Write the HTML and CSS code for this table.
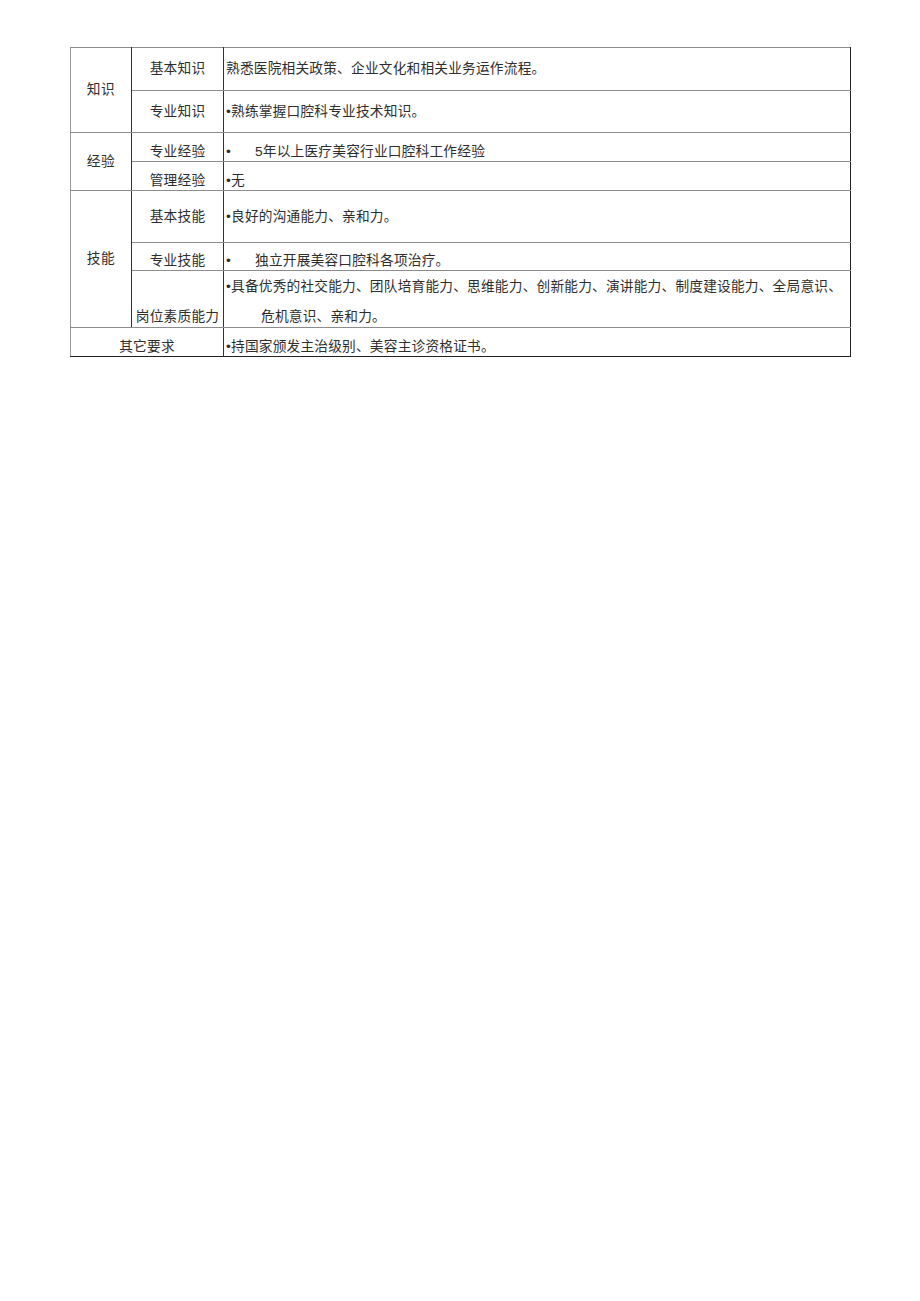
FILE: index.html
```html
<!DOCTYPE html>
<html lang="zh-CN">
<head>
<meta charset="utf-8">
<title>岗位要求</title>
<link rel="stylesheet" href="styles.css">
</head>
<body>
<div class="page">
<table class="req">
  <colgroup>
    <col class="c1"><col class="c2"><col class="c3">
  </colgroup>
  <tbody>
    <tr class="r1">
      <td class="cat" rowspan="2">知识</td>
      <td class="sub mid">基本知识</td>
      <td class="txt mid">熟悉医院相关政策、企业文化和相关业务运作流程。</td>
    </tr>
    <tr class="r2">
      <td class="sub mid">专业知识</td>
      <td class="txt mid">•熟练掌握口腔科专业技术知识。</td>
    </tr>
    <tr class="r3">
      <td class="cat" rowspan="2">经验</td>
      <td class="sub">专业经验</td>
      <td class="txt">•<span class="gap"></span>5年以上医疗美容行业口腔科工作经验</td>
    </tr>
    <tr class="r4">
      <td class="sub">管理经验</td>
      <td class="txt">•无</td>
    </tr>
    <tr class="r5">
      <td class="cat" rowspan="3">技能</td>
      <td class="sub mid">基本技能</td>
      <td class="txt mid">•良好的沟通能力、亲和力。</td>
    </tr>
    <tr class="r6">
      <td class="sub">专业技能</td>
      <td class="txt">•<span class="gap"></span>独立开展美容口腔科各项治疗。</td>
    </tr>
    <tr class="r7">
      <td class="sub">岗位素质能力</td>
      <td class="txt multi">
        <div class="ln">•具备优秀的社交能力、团队培育能力、思维能力、创新能力、演讲能力、制度建设能力、全局意识、</div>
        <div class="ln indent">危机意识、亲和力。</div>
      </td>
    </tr>
    <tr class="r8">
      <td class="sub" colspan="2">其它要求</td>
      <td class="txt">•持国家颁发主治级别、美容主诊资格证书。</td>
    </tr>
  </tbody>
</table>
</div>
</body>
</html>
```

FILE: styles.css
```css
html, body {
  margin: 0;
  padding: 0;
  background: #ffffff;
}

body {
  font-family: "Liberation Sans", "Noto Sans CJK SC", sans-serif;
  color: #2e2e2e;
}

.page {
  padding: 47px 0 0 70px;
}

.req {
  border-collapse: collapse;
  table-layout: fixed;
  width: 780px;
  font-size: 13.7px;
  line-height: 16px;
  letter-spacing: 0.2px;
  border-top: 1px solid #8c8c8c;
  border-left: 1px solid #9a9a9a;
  border-right: 1px solid #222;
  border-bottom: 1px solid #222;
}

.c1 { width: 61px; }
.c2 { width: 92px; }
.c3 { width: 627px; }

.req td {
  padding: 0;
  border-top: 1px solid #8c8c8c;
  border-bottom: 1px solid #8c8c8c;
  border-left: 1px solid #333;
  border-right: 1px solid #333;
  white-space: nowrap;
  overflow: hidden;
}

.req tr:last-child td { border-bottom-color: #222; }
.req td.txt { border-right-color: #222; }
.req td.cat { border-left-color: #9a9a9a; }
.req tr.r8 td.sub { border-left-color: #9a9a9a; }

.r1 { height: 43px; }
.r2 { height: 42px; }
.r3 { height: 29px; }
.r4 { height: 29px; }
.r5 { height: 52px; }
.r6 { height: 28px; }
.r7 { height: 57px; }
.r8 { height: 29px; }

.cat {
  text-align: center;
  vertical-align: middle;
  letter-spacing: 0.5px;
}

.sub {
  text-align: center;
  vertical-align: bottom;
  padding-bottom: 1px !important;
}

.txt {
  text-align: left;
  vertical-align: bottom;
  padding-left: 2px !important;
  padding-bottom: 1px !important;
}

.sub.mid, .txt.mid {
  vertical-align: middle;
  padding-bottom: 0 !important;
}

.gap {
  display: inline-block;
  width: 24px;
}

.r7 .sub,
.r7 .multi {
  padding-bottom: 2px !important;
}

.multi .ln + .ln {
  margin-top: 14px;
}

.multi .indent {
  padding-left: 35px;
}
```
